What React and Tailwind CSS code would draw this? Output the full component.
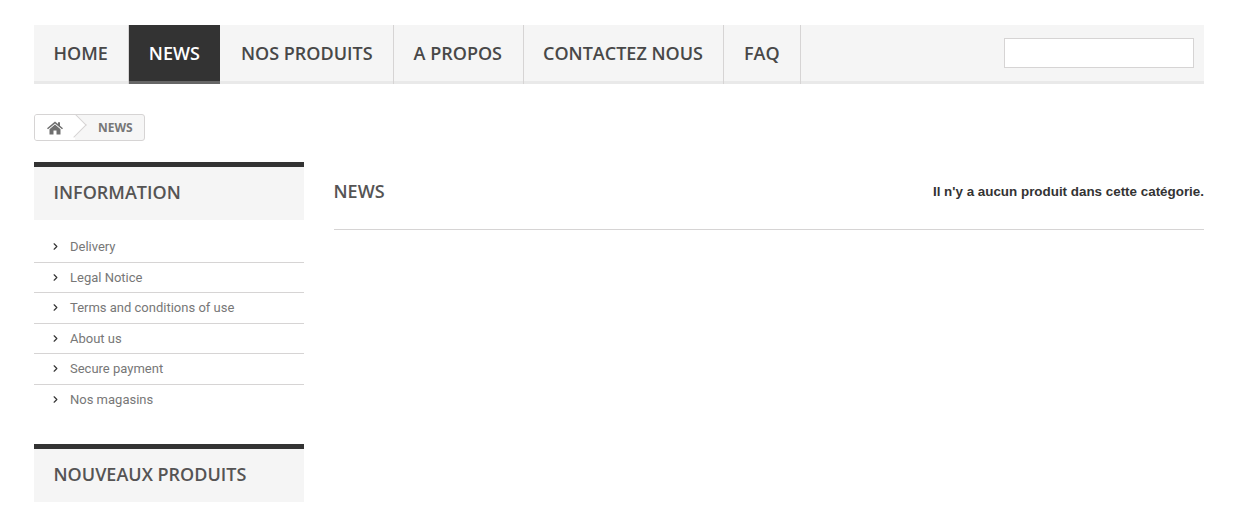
import React from 'react';
import { ChevronRight } from 'lucide-react';

const menuItems = ['HOME', 'NEWS', 'NOS PRODUITS', 'A PROPOS', 'CONTACTEZ NOUS', 'FAQ'];
const infoLinks = ['Delivery', 'Legal Notice', 'Terms and conditions of use', 'About us', 'Secure payment', 'Nos magasins'];

const HomeIcon = () => (
    <svg width="16" height="14" viewBox="0 0 16 14" fill="#6f6f6f">
        <path d="M8 0.5 L11 3 V1.2 H13 V4.7 L16 7.3 L15 8.3 L8 2.5 L1 8.3 L0 7.3 Z" />
        <path d="M8 3.6 L13.5 8.2 V13.5 H9.5 V9.5 H6.5 V13.5 H2.5 V8.2 Z" />
    </svg>
);

const SideTitle = ({ children }) => (
    <div className="border-t-[5px] border-[#333333] bg-[#f5f5f5] h-[58px] pl-[19.5px] pb-[2px] flex items-center font-['Open_Sans',sans-serif] font-semibold text-[18px] text-[#555454]">
        {children}
    </div>
);

const App = () => {
    return (
        <div className="bg-white h-[506px] overflow-hidden px-[34px] pt-[25px] w-[1238px]">
            <nav className="flex justify-between h-[59px] bg-[#f5f5f5] border-b-[3px] border-[#e9e9e9]">
                <ul className="flex font-['Open_Sans',sans-serif] font-semibold text-[18px] text-[#484848]">
                    {menuItems.map(item => (
                        <li
                            key={item}
                            className={item === 'NEWS'
                                ? 'pl-[19.5px] pr-[20.5px] h-[59px] flex items-center bg-[#333333] text-white border-b-[3px] border-[#666666] mr-px'
                                : 'pl-[19.5px] pr-[20.5px] pb-[2px] h-[59px] flex items-center border-r border-[#d6d4d4]'}
                        >
                            {item}
                        </li>
                    ))}
                </ul>
                <input className="w-[190px] h-[30px] mt-[13px] mr-[10px] bg-white border border-[#d6d4d4]" />
            </nav>

            <div className="mt-[30px] w-[111px] h-[27px] flex items-center bg-[#f6f6f6] border border-[#d6d4d4] rounded-[3px] overflow-hidden">
                <div className="relative w-[40px] h-full bg-white flex items-center pl-3 shrink-0">
                    <HomeIcon />
                    <div className="absolute left-[30px] top-[1px] w-[18px] h-[18px] rotate-45 bg-white border-t border-r border-[#d6d4d4]" />
                </div>
                <span className="ml-[23px] font-['Open_Sans',sans-serif] font-bold text-[12px] text-[#777777]">NEWS</span>
            </div>

            <div className="flex mt-[21px]">
                <aside className="w-[270px] shrink-0">
                    <SideTitle>INFORMATION</SideTitle>
                    <ul className="mt-[12px] font-['Roboto',sans-serif] text-[13px] text-[#777777]">
                        {infoLinks.map((link, i) => (
                            <li
                                key={link}
                                className={i < infoLinks.length - 1
                                    ? 'h-[30.5px] flex items-center pl-[16px] border-b border-[#d6d4d4]'
                                    : 'h-[30.5px] flex items-center pl-[16px]'}
                            >
                                <ChevronRight size={11} strokeWidth={2.5} className="text-[#333333] mr-[9px]" />
                                {link}
                            </li>
                        ))}
                    </ul>
                    <div className="mt-[29px]">
                        <SideTitle>NOUVEAUX PRODUITS</SideTitle>
                    </div>
                </aside>
                <main className="ml-[30px] flex-1 h-[68px] flex justify-between items-start pt-[17px] border-b border-[#d6d4d4]">
                    <h1 className="font-['Open_Sans',sans-serif] font-semibold text-[18px] leading-[24px] text-[#555454] -ml-[0.5px]">NEWS</h1>
                    <p className="mt-px font-['Liberation_Sans',sans-serif] font-bold text-[13.4px] leading-[24px] text-[#333333]">Il n'y a aucun produit dans cette catégorie.</p>
                </main>
            </div>
        </div>
    );
};

export default App;
